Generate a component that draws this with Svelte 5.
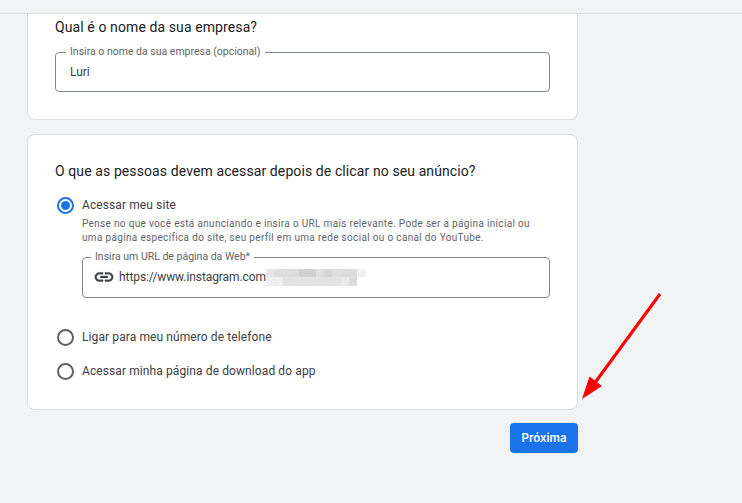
<script lang="ts">
	// pixelated blur over the hidden part of the url
	const blurRows = [
		['#e6e6e6', '#dedede', '#dedede', '#dddddd', '#d0d2d2', '#d0d2d2', '#e0e0de', '#d4d6d6', '#e2e0de', '#dcdcdc', '#dcdcdc', '#f0f1f1'],
		['#f0f0f0', '#eeeeee', '#e2e2e2', '#e4e4e2', '#e4e4e4', '#e4e4e4', '#e4e3e2', '#e4e4e4', '#e4e4e4', '#eaeaea', '#dcdcdc', '#fff']
	]
</script>

<div class="page">
	<div class="topbar"></div>

	<div class="content">
		<section class="card first">
			<h2>Qual é o nome da sua empresa?</h2>
			<fieldset class="field">
				<legend>Insira o nome da sua empresa (opcional)</legend>
				<span class="value">Luri</span>
			</fieldset>
		</section>

		<section class="card second">
			<h2>O que as pessoas devem acessar depois de clicar no seu anúncio?</h2>

			<div class="option selected">
				<span class="radio on"></span>
				<span class="option-label">Acessar meu site</span>
			</div>
			<div class="details">
				<p>Pense no que você está anunciando e insira o URL mais relevante. Pode ser a página inicial ou<br />uma página específica do site, seu perfil em uma rede social ou o canal do YouTube.</p>
				<fieldset class="field url">
					<legend>Insira um URL de página da Web*</legend>
					<svg class="link-icon" viewBox="0 0 24 24" aria-hidden="true">
						<path d="M3.9 12c0-1.71 1.39-3.1 3.1-3.1h4V7H7c-2.76 0-5 2.24-5 5s2.24 5 5 5h4v-1.9H7c-1.71 0-3.1-1.39-3.1-3.1zM8 13h8v-2H8v2zm9-6h-4v1.9h4c1.71 0 3.1 1.39 3.1 3.1s-1.39 3.1-3.1 3.1h-4V17h4c2.76 0 5-2.24 5-5s-2.24-5-5-5z" />
					</svg>
					<span class="value">https://www.instagram.com</span>
					<div class="blur">
						{#each blurRows as row}
							<div class="blur-row">
								{#each row as c}
									<span class="blur-cell" style:background={c}></span>
								{/each}
							</div>
						{/each}
					</div>
				</fieldset>
			</div>

			<div class="option phone">
				<span class="radio"></span>
				<span class="option-label">Ligar para meu número de telefone</span>
			</div>
			<div class="option app">
				<span class="radio"></span>
				<span class="option-label">Acessar minha página de download do app</span>
			</div>
		</section>

		<div class="actions">
			<button class="next">Próxima</button>
		</div>
	</div>

	<svg class="arrow" width="742" height="503" viewBox="0 0 742 503" aria-hidden="true">
		<line x1="660" y1="294" x2="594" y2="384" stroke="#ff0000" stroke-width="3" />
		<polygon points="582,399 589.500,376.500 602,386" fill="#ff0000" />
	</svg>
</div>

<style>
	:global(body) {
		margin: 0;
		background: #f1f3f4;
	}

	.page {
		position: relative;
		width: 742px;
		height: 503px;
		overflow: hidden;
		background: #f1f3f4;
		font-family: Roboto, "Liberation Sans", sans-serif;
		color: #3c4043;
	}

	.topbar {
		height: 13px;
		border-bottom: 1px solid #dadce0;
	}

	.content {
		width: 551px;
		margin-left: 27px;
		display: flex;
		flex-direction: column;
	}

	.card {
		box-sizing: border-box;
		background: #fff;
		border: 1px solid #dadce0;
		border-radius: 8px;
		padding: 0 27px;
	}

	.card.first {
		height: 106px;
		border-top: none;
		border-radius: 0 0 8px 8px;
		padding-top: 4px;
	}

	.card.second {
		height: 276px;
		margin-top: 14px;
		padding-top: 27px;
	}

	h2 {
		margin: 0;
		font-size: 14px;
		line-height: 19px;
		font-weight: 400;
		font-family: Roboto, sans-serif;
		letter-spacing: 0.1px;
		color: #202124;
	}

	.field {
		box-sizing: border-box;
		margin: 0;
		height: 46px;
		min-width: 0;
		display: flex;
		align-items: center;
		padding: 0 14px;
		border: 1px solid #80868b;
		border-radius: 4px;
	}

	.first .field {
		margin-top: 9px;
	}

	legend {
		padding: 0 4px;
		margin-left: -4px;
		font-size: 10.500px;
		line-height: 12px;
		color: #5f6368;
	}

	.value {
		font-size: 12px;
		letter-spacing: -0.08px;
		color: #3c4043;
		position: relative;
		top: -3px;
	}

	.option {
		display: flex;
		align-items: center;
		gap: 8px;
		margin-left: 2px;
		height: 20px;
	}

	.option.selected {
		margin-top: 14px;
	}

	.option.phone {
		margin-top: 29px;
	}

	.option.app {
		margin-top: 14px;
	}

	.option-label {
		font-size: 12px;
		letter-spacing: 0.1px;
		color: #3c4043;
	}

	.radio {
		box-sizing: border-box;
		width: 17px;
		height: 17px;
		border: 2px solid #5f6368;
		border-radius: 50%;
		display: flex;
		align-items: center;
		justify-content: center;
	}

	.radio.on {
		border-color: #1a73e8;
	}

	.radio.on::after {
		content: "";
		width: 9px;
		height: 9px;
		border-radius: 50%;
		background: #1a73e8;
	}

	.details {
		margin-left: 27px;
	}

	p {
		margin: 2px 0 0;
		font-size: 10px;
		line-height: 14px;
		letter-spacing: 0.33px;
		color: #5f6368;
	}

	.url {
		height: 47px;
		margin-top: 6px;
		padding-left: 12px;
	}

	.link-icon {
		width: 22px;
		height: 22px;
		margin-left: -2px;
		margin-right: 4px;
		fill: #3c4043;
		stroke: #3c4043;
		stroke-width: 0.4;
		position: relative;
		top: -3px;
		flex: none;
	}

	.blur {
		position: relative;
		top: -3px;
		display: flex;
		flex-direction: column;
	}

	.blur-row {
		display: flex;
	}

	.blur-cell {
		width: 8.300px;
		height: 8.500px;
	}

	.actions {
		display: flex;
		justify-content: flex-end;
		margin-top: 13px;
	}

	.next {
		width: 68px;
		height: 30px;
		padding: 0;
		border: none;
		border-radius: 4px;
		background: #1a73e8;
		color: #fff;
		font-family: Inter, Roboto, sans-serif;
		font-size: 11.500px;
		font-weight: 600;
	}

	.arrow {
		position: absolute;
		top: 0;
		left: 0;
		pointer-events: none;
	}
</style>
